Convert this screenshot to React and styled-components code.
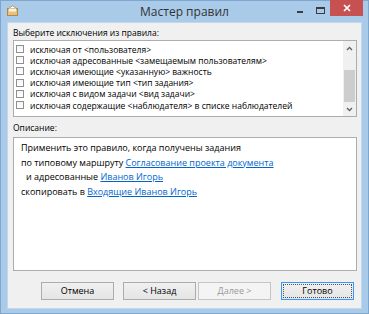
import React from 'react';
import styled, { createGlobalStyle } from 'styled-components';

const Global = createGlobalStyle`
  html, body { margin: 0; padding: 0; }
  body {
    width: 369px; height: 314px; overflow: hidden;
    font-family: 'Open Sans', 'Noto Sans', sans-serif;
  }
`;

const Window = styled.div`
  box-sizing: border-box;
  width: 369px;
  height: 314px;
  border: 1px solid #7fa6cd;
  background: #a9cbe9;
  padding: 0 6px 4px 6px;
  display: flex;
  flex-direction: column;
`;

const TitleBar = styled.div`
  height: 21px;
  flex: none;
  display: grid;
  grid-template-columns: 1fr auto 1fr;
  align-items: start;
`;

const AppIcon = styled.svg`
  display: block;
  margin-top: 4px;
  width: 11px;
  height: 11px;
`;

const Title = styled.div`
  font-size: 12px;
  line-height: 21px;
  color: #333;
  white-space: nowrap;
`;

const Controls = styled.div`
  justify-self: end;
  display: flex;
  align-items: flex-start;
  margin-right: -1px;
  margin-top: -1px;
`;

const CtlButton = styled.div`
  width: ${p => p.$w}px;
  height: 16px;
  display: flex;
  align-items: center;
  justify-content: center;
  background: ${p => p.$bg || 'transparent'};
`;

const MinGlyph = styled.div`
  width: 6px;
  height: 2px;
  background: #3c3c3c;
  margin-top: 8px;
`;

const MaxGlyph = styled.div`
  box-sizing: border-box;
  width: 9px;
  height: 7px;
  border: 1px solid #3c3c3c;
  border-top-width: 2px;
  margin-top: 4px;
`;

const Client = styled.div`
  flex: 1;
  box-sizing: border-box;
  background: #f0f0f0;
  border: 1px solid #c2d8ec;
  padding: 0 4px 8px 5px;
  display: flex;
  flex-direction: column;
  font-size: 8.5px;
  color: #000;
`;

const Label = styled.div`
  box-sizing: border-box;
  height: ${p => p.$h}px;
  padding-top: ${p => p.$pt}px;
  line-height: 13px;
  white-space: nowrap;
`;

const ListBox = styled.div`
  box-sizing: border-box;
  height: 77px;
  border: 1px solid #abadb3;
  background: #fff;
  display: flex;
`;

const Items = styled.div`
  flex: 1;
  padding-top: 2.5px;
  overflow: hidden;
`;

const Item = styled.div`
  height: 11.2px;
  line-height: 11px;
  display: flex;
  align-items: center;
  white-space: nowrap;
  padding-left: 2px;
`;

const Check = styled.span`
  box-sizing: border-box;
  flex: none;
  width: 8px;
  height: 8px;
  border: 1px solid #8f8f8f;
  background: linear-gradient(#f4f4f4, #ffffff);
  margin-right: 6px;
`;

const ScrollBar = styled.div`
  width: 13px;
  flex: none;
  background: #f0f0f0;
  display: flex;
  flex-direction: column;
`;

const ArrowCell = styled.div`
  height: 14px;
  display: flex;
  align-items: center;
  justify-content: center;
`;

const Track = styled.div`
  flex: 1;
  display: flex;
  flex-direction: column;
  justify-content: flex-end;
  padding: 0 1px;
`;

const Thumb = styled.div`
  height: 32px;
  background: #cdcdcd;
`;

const DescBox = styled.div`
  box-sizing: border-box;
  height: 134px;
  border: 1px solid #abadb3;
  background: #fff;
  padding: 3px 7px 0 7px;
  font-size: 9px;
`;

const Line = styled.div`
  line-height: 14.5px;
  white-space: nowrap;
  padding-left: ${p => p.$indent || 0}px;
`;

const Link = styled.a`
  color: #0066cc;
  text-decoration: underline;
  cursor: pointer;
`;

const ButtonRow = styled.div`
  display: flex;
  justify-content: flex-end;
  margin-top: 11px;
  padding-right: 3px;
`;

const Button = styled.div`
  box-sizing: border-box;
  width: 73px;
  height: 18px;
  margin-left: ${p => p.$ml || 0}px;
  border: 1px solid ${p => (p.$default ? '#3399ff' : p.$disabled ? '#c5c5c5' : '#acacac')};
  background: ${p => (p.$disabled ? '#f4f4f4' : 'linear-gradient(#f0f0f0, #e5e5e5)')};
  color: ${p => (p.$disabled ? '#9a9a9a' : '#000')};
  display: flex;
  align-items: center;
  justify-content: center;
  font-size: 9px;
  line-height: 12px;
  padding: 1px;
`;

const Focus = styled.div`
  box-sizing: border-box;
  width: 100%;
  height: 100%;
  border: 1px dotted #555;
  display: flex;
  align-items: center;
  justify-content: center;
`;

const Chevron = ({ up }) => (
  <svg width="7" height="5" viewBox="0 0 7 5">
    <polyline
      points={up ? '1,4 3.5,1.5 6,4' : '1,1 3.5,3.5 6,1'}
      fill="none"
      stroke="#606060"
      strokeWidth="1.3"
    />
  </svg>
);

const items = [
  'исключая от <пользователя>',
  'исключая адресованные <замещаемым пользователям>',
  'исключая имеющие <указанную> важность',
  'исключая имеющие тип <тип задания>',
  'исключая с видом задачи <вид задачи>',
  'исключая содержащие <наблюдателя> в списке наблюдателей',
];

export default function App() {
  return (
    <>
      <Global />
      <Window>
        <TitleBar>
          <AppIcon viewBox="0 0 11 11">
            <rect x="0.5" y="3.5" width="10" height="7" fill="#e7c27c" stroke="#b08947" />
            <path d="M1.5 3.5 L5.5 0.8 L9.5 3.5 Z" fill="#fff" stroke="#b08947" strokeWidth="0.8" />
            <rect x="2" y="3.5" width="7" height="3" fill="#fbf3e2" />
          </AppIcon>
          <Title>Мастер правил</Title>
          <Controls>
            <CtlButton $w={22}>
              <MinGlyph />
            </CtlButton>
            <CtlButton $w={19}>
              <MaxGlyph />
            </CtlButton>
            <CtlButton $w={33} $bg="#c75050">
              <svg width="8" height="8" viewBox="0 0 8 8">
                <path d="M1 1 L7 7 M7 1 L1 7" stroke="#fff" strokeWidth="1.7" />
              </svg>
            </CtlButton>
          </Controls>
        </TitleBar>
        <Client>
          <Label $h={17} $pt={3}>Выберите исключения из правила:</Label>
          <ListBox>
            <Items>
              {items.map(t => (
                <Item key={t}>
                  <Check />
                  {t}
                </Item>
              ))}
            </Items>
            <ScrollBar>
              <ArrowCell>
                <Chevron up />
              </ArrowCell>
              <Track>
                <Thumb />
              </Track>
              <ArrowCell>
                <Chevron />
              </ArrowCell>
            </ScrollBar>
          </ListBox>
          <Label $h={20} $pt={4}>Описание:</Label>
          <DescBox>
            <Line>Применить это правило, когда получены задания</Line>
            <Line>
              по типовому маршруту <Link>Согласование проекта документа</Link>
            </Line>
            <Line $indent={5}>
              и адресованные <Link>Иванов Игорь</Link>
            </Line>
            <Line>
              скопировать в <Link>Входящие Иванов Игорь</Link>
            </Line>
          </DescBox>
          <ButtonRow>
            <Button>Отмена</Button>
            <Button $ml={9}>&lt; Назад</Button>
            <Button $ml={2} $disabled>Далее &gt;</Button>
            <Button $ml={10} $default>
              <Focus>Готово</Focus>
            </Button>
          </ButtonRow>
        </Client>
      </Window>
    </>
  );
}
